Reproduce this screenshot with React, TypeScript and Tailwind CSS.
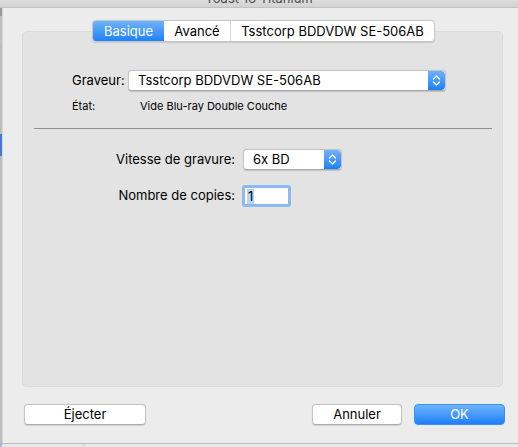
import React from "react";

function Stepper() {
  return (
    <div className="w-[17px] h-full rounded-r-[4px] bg-gradient-to-b from-[#6cb2fb] to-[#1b7ff9] flex items-center justify-center">
      <svg width="9" height="13" viewBox="0 0 9 13" fill="none">
        <path d="M1.5 5 L4.5 2 L7.5 5" stroke="white" strokeWidth="1.3" strokeLinecap="round" strokeLinejoin="round" />
        <path d="M1.5 8 L4.5 11 L7.5 8" stroke="white" strokeWidth="1.3" strokeLinecap="round" strokeLinejoin="round" />
      </svg>
    </div>
  );
}

function Popup({ w, text }: { w: string; text: string }) {
  return (
    <div className={`${w} h-[21px] flex bg-white rounded-[4px] border border-[#c4c4c4] border-b-[#a8a8a8] shadow-[0_0.5px_1px_rgba(0,0,0,0.15)] overflow-hidden`}>
      <div className="flex-1 pl-[9px] text-[13px] leading-[19px] text-black">{text}</div>
      <Stepper />
    </div>
  );
}

export default function App() {
  return (
    <div
      className="w-[518px] h-[447px] overflow-hidden bg-[#e6e6e6] flex flex-col"
      style={{ fontFamily: "Inter, 'Liberation Sans', sans-serif" }}
    >
      {/* window title bar remnant */}
      <div className="h-[8px] shrink-0 bg-gradient-to-b from-[#dcdcdc] to-[#d3d3d3] border-b border-[#c2c2c2] overflow-hidden flex justify-center">
        <div className="text-[13px] leading-[13px] -mt-[8px] text-[#4d4d4d]">Toast 16 Titanium</div>
      </div>
      <div className="flex h-[435px] shrink-0">
        {/* left strip of parent window */}
        <div className="w-[2px] flex flex-col bg-[#bdbdbd]">
          <div className="h-[8px] bg-[#9a9a9a]" />
          <div className="h-[28px] bg-[#c0c0c0]" />
          <div className="h-[90px]" />
          <div className="h-[22px] bg-[#3f7ad9]" />
          <div className="flex-1" />
        </div>
        {/* sheet */}
        <div className="flex-1 bg-[#ececec] flex flex-col pt-[12px] border-l border-[#d6d6d6]">
          <div className="pl-[19px] pr-[15px] flex flex-col">
            {/* tabs */}
            <div className="flex justify-center relative z-10 pl-[2px]">
              <div className="flex h-[22px] rounded-[4px] border border-[#c6c6c6] bg-white shadow-[0_0.5px_1px_rgba(0,0,0,0.12)] text-[13px] leading-[20px] overflow-hidden">
                <div className="w-[71px] text-center text-white bg-gradient-to-b from-[#6cb3fa] to-[#1c80fa]">Basique</div>
                <div className="w-[67px] text-center text-black border-r border-[#d6d6d6]">Avancé</div>
                <div className="w-[203px] text-center text-black">Tsstcorp BDDVDW SE-506AB</div>
              </div>
            </div>
            {/* group box */}
            <div className="-mt-[11px] h-[356px] rounded-[5px] bg-[#e3e3e3] border border-[#dadada] flex flex-col">
              <div className="pt-[38px] pl-[49px] flex items-center">
                <span className="text-[13px] text-black w-[56px]">Graveur:</span>
                <Popup w="w-[318px]" text="Tsstcorp BDDVDW SE-506AB" />
              </div>
              <div className="mt-[8px] pl-[49px] flex text-[11px] leading-[14px] text-black">
                <span className="w-[68px]">État:</span>
                <span>Vide Blu-ray Double Couche</span>
              </div>
              <div className="mt-[15px] ml-[11px] mr-[10px] h-px bg-[#8f8f8f]" />
              <div className="mt-[20px] flex items-center">
                <span className="w-[212px] text-right text-[13px] text-black">Vitesse de gravure:</span>
                <div className="ml-[8px]">
                  <Popup w="w-[99px]" text="6x BD" />
                </div>
              </div>
              <div className="mt-[15px] flex items-center">
                <span className="w-[212px] text-right text-[13px] text-black">Nombre de copies:</span>
                <div className="ml-[7px] w-[49px] h-[22px] rounded-[3px] border-[3px] border-[#8fb8ef] bg-white flex items-center">
                  <span className="ml-[2px] text-[13px] leading-[15px] text-black bg-[#b3d4fc] px-px">1</span>
                </div>
              </div>
            </div>
          </div>
          {/* buttons */}
          <div className="mt-[17px] flex items-center pl-[21px] pr-[13px] text-[13px]">
            <div className="w-[122px] h-[21px] rounded-[4px] bg-white border border-[#c4c4c4] border-b-[#acacac] shadow-[0_0.5px_1px_rgba(0,0,0,0.12)] text-center leading-[19px] text-black">Éjecter</div>
            <div className="flex-1" />
            <div className="w-[90px] h-[21px] rounded-[4px] bg-white border border-[#c4c4c4] border-b-[#acacac] shadow-[0_0.5px_1px_rgba(0,0,0,0.12)] text-center leading-[19px] text-black">Annuler</div>
            <div className="ml-[12px] w-[91px] h-[21px] rounded-[4px] bg-gradient-to-b from-[#6cb3fa] to-[#1a7ffa] border border-[#3d8ef5] text-center leading-[19px] text-white">OK</div>
          </div>
        </div>
      </div>
      <div className="flex-1 bg-[#e9e9e9] border-t border-[#bdbdbd] flex">
        <div className="w-[2px] bg-[#9fb9e0]" />
        <div className="w-[81px]" />
        <div className="w-px bg-[#c8c8c8]" />
      </div>
    </div>
  );
}
